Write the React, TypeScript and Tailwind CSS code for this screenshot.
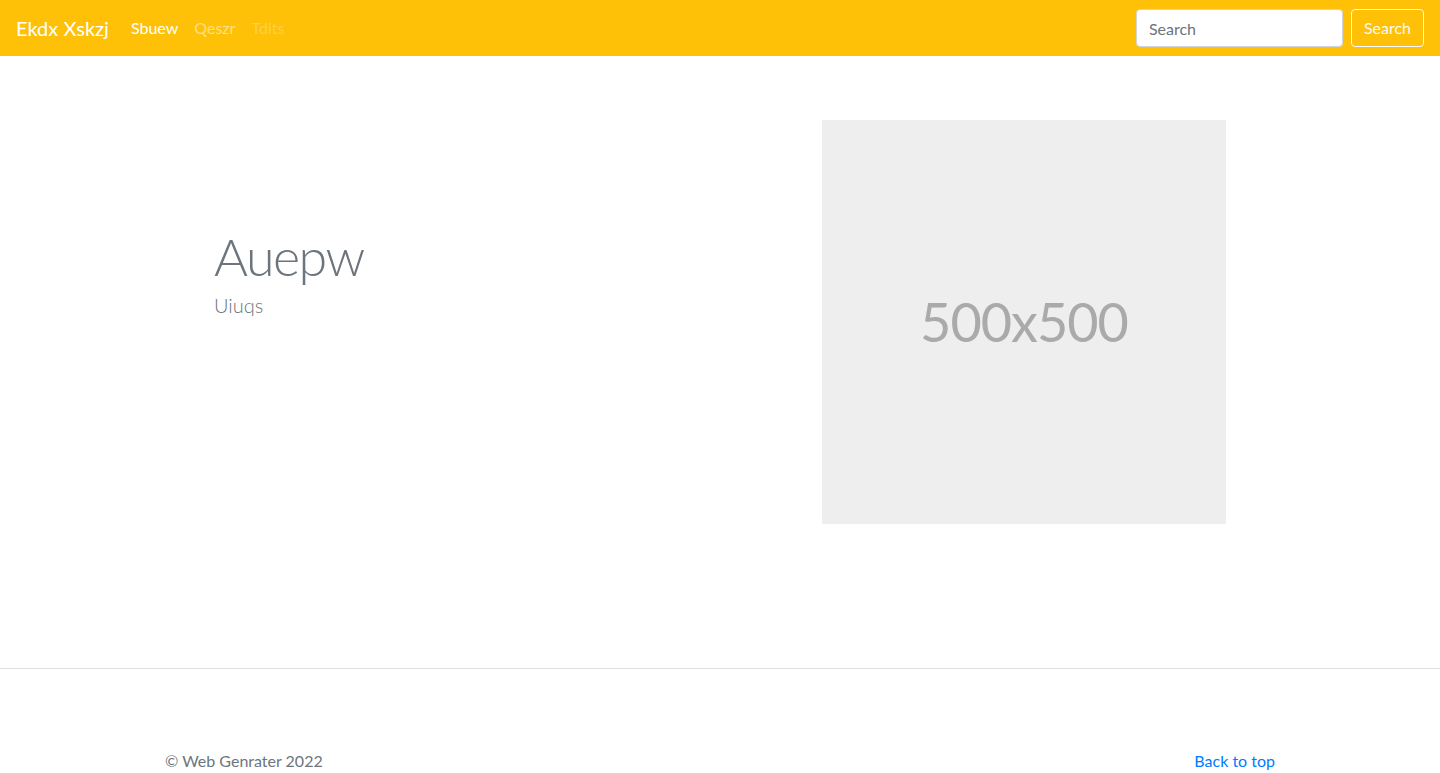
import React from "react";

const font = { fontFamily: 'Lato, "Noto Sans", sans-serif' };

const Navbar: React.FC = () => (
  <nav className="flex h-14 items-center justify-between bg-[#ffc107] px-4">
    <div className="flex items-center">
      <a href="#" className="mr-[14px] text-[20px] leading-[30px] text-white">
        Ekdx Xskzj
      </a>
      <ul className="flex text-base leading-6">
        <li>
          <a href="#" className="px-2 text-white">
            Sbuew
          </a>
        </li>
        <li>
          <a href="#" className="px-2 text-white/50">
            Qeszr
          </a>
        </li>
        <li>
          <a href="#" className="px-2 text-white/25">
            Tdits
          </a>
        </li>
      </ul>
    </div>
    <form className="flex items-center" onSubmit={(e) => e.preventDefault()}>
      <input
        type="search"
        placeholder="Search"
        className="h-[38px] w-[207px] rounded border border-[#ced4da] bg-white px-3 text-base text-[#495057] placeholder:text-[#6c757d] outline-none"
      />
      <button
        type="submit"
        className="ml-2 h-[38px] rounded border border-[#f8f9fa] px-3 text-base text-[#f8f9fa]"
      >
        Search
      </button>
    </form>
  </nav>
);

export default function App() {
  return (
    <div className="min-h-screen bg-white text-[#212529]" style={font}>
      <Navbar />

      {/* Hero */}
      <main className="pb-36 pt-16">
        <div className="mx-auto grid w-[1140px] grid-cols-2">
          <div className="pl-16 pt-[105px]">
            <h1 className="mb-[3px] text-[52px] font-light leading-[62px] tracking-[-1.5px] text-[#6c757d]">
              Auepw
            </h1>
            <p className="text-[20px] font-light leading-[30px] text-[#6c757d]">
              Uiuqs
            </p>
          </div>
          <div className="pl-[102px]">
            <div className="flex h-[404px] w-[404px] items-center justify-center bg-[#eeeeee]">
              <span className="text-[54px] leading-none tracking-[-1px] text-[#aaaaaa]">
                500x500
              </span>
            </div>
          </div>
        </div>
      </main>

      {/* Footer */}
      <footer className="border-t border-[#dee2e6] pb-20 pt-20">
        <div className="mx-auto flex w-[1140px] justify-between px-[15px] text-base leading-6">
          <p className="text-[#6c757d]">© Web Genrater 2022</p>
          <a href="#" className="text-[#007bff]">
            Back to top
          </a>
        </div>
      </footer>
    </div>
  );
}
